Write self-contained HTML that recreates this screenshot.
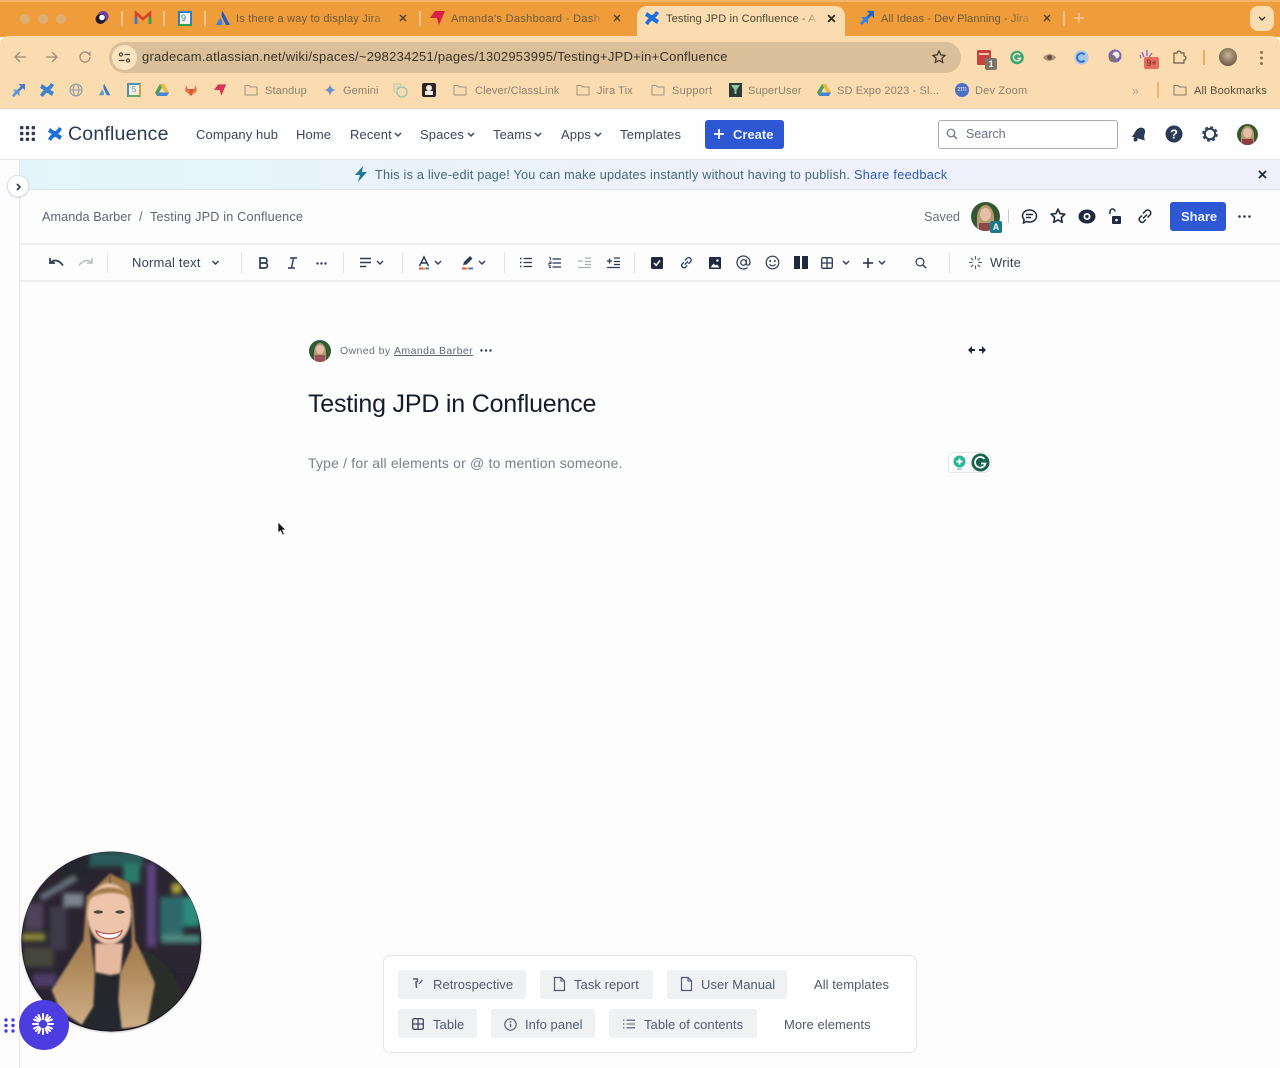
<!DOCTYPE html>
<html><head><meta charset="utf-8"><title>Testing JPD in Confluence</title>
<style>
html,body{margin:0;padding:0;width:1280px;height:1068px;overflow:hidden;background:#fdfdfe}
body{position:relative;font-family:"Liberation Sans",sans-serif;color:#2b3a55}
.t{position:absolute;white-space:nowrap;line-height:16px;height:16px}
.b{position:absolute}
svg{position:absolute;overflow:visible}
.tab{font-size:11px;color:#6b5a3d;letter-spacing:.2px}
.bm{font-size:11px;color:#8d8270;letter-spacing:.12px}
.nav{font-size:13px;color:#3a4660;letter-spacing:.1px}
.chip{position:absolute;background:#f0f1f3;border-radius:3px;height:29px}
.cl{font-size:13px;color:#4d5a70;letter-spacing:.05px}
</style></head><body>

<!-- chrome -->
<div class="b" style="left:0;top:0;width:1280px;height:37px;background:#ef9c3a"></div>
<div class="b" style="left:0;top:0;width:1280px;height:2px;background:#f3b56a"></div>
<div class="b" style="left:0;top:36px;width:1280px;height:73px;background:#fadcb0;border-radius:8px 8px 0 0"></div>
<div class="b" style="left:0;top:108px;width:1280px;height:1px;background:#e6d6bb"></div>
<div class="b" style="left:20px;top:14px;width:10px;height:10px;border-radius:50%;background:#e0ae72"></div>
<div class="b" style="left:38px;top:14px;width:10px;height:10px;border-radius:50%;background:#e0ae72"></div>
<div class="b" style="left:56px;top:14px;width:10px;height:10px;border-radius:50%;background:#e0ae72"></div>

<!-- tab icons -->
<svg style="left:94px;top:10px" width="16" height="16" viewBox="0 0 16 16"><circle cx="9" cy="6.500" r="5.500" fill="#6b3fa0"/><circle cx="6.500" cy="9" r="5" fill="#1c1a24"/><circle cx="8" cy="7.500" r="2.800" fill="#fff"/></svg>
<div class="b" style="left:121px;top:11px;width:2px;height:15px;background:#f6c285"></div>
<svg style="left:135px;top:11px" width="16" height="14" viewBox="0 0 16 14"><path d="M1 13V2l7 6 7-6v11" fill="none" stroke="#d8402f" stroke-width="2.600"/><path d="M1 13V6" stroke="#3a7bd5" stroke-width="2.600"/><path d="M15 13V6" stroke="#2ba24c" stroke-width="2.600"/></svg>
<div class="b" style="left:163px;top:11px;width:2px;height:15px;background:#f6c285"></div>
<div class="b" style="left:178px;top:11px;background:#f7f3e8;border:2px solid #2f7fc6;border-bottom-color:#2ba24c;width:10px;height:11px"></div>
<div class="t" style="left:181px;top:10px;font-size:9px;color:#2f7fc6">9</div>
<div class="b" style="left:204px;top:11px;width:2px;height:15px;background:#f6c285"></div>
<svg style="left:215px;top:10px" width="16" height="17" viewBox="0 0 16 17"><path d="M7.500 1c-1.500 3-1.200 5 .5 8l3 6h4z" fill="#1f5cc4"/><path d="M5 8L1 15h6c1-2 0-5-2-7z" fill="#3c7fe0"/></svg>
<div class="t tab" style="left:236px;top:11px">Is there a way to display Jira</div>
<div class="b" style="left:372px;top:8px;width:16px;height:20px;background:linear-gradient(90deg,rgba(239,156,58,0),#ef9c3a)"></div>
<svg style="left:399px;top:14px" width="8" height="8" viewBox="0 0 8 8"><path d="M1 1l6 6M7 1L1 7" stroke="#4a3c28" stroke-width="1.400"/></svg>
<div class="b" style="left:419px;top:11px;width:2px;height:15px;background:#f6c285"></div>
<svg style="left:430px;top:10px" width="16" height="16" viewBox="0 0 16 16"><path d="M5 1h10l-3 7-3 7-2-7H0z" fill="#dd1f47"/></svg>
<div class="t tab" style="left:451px;top:11px;letter-spacing:.33px">Amanda's Dashboard - Dash</div>
<div class="b" style="left:590px;top:8px;width:14px;height:20px;background:linear-gradient(90deg,rgba(239,156,58,0),#ef9c3a)"></div>
<svg style="left:613px;top:14px" width="8" height="8" viewBox="0 0 8 8"><path d="M1 1l6 6M7 1L1 7" stroke="#4a3c28" stroke-width="1.400"/></svg>

<!-- active tab -->
<div class="b" style="left:637px;top:6px;width:208px;height:31px;background:#fadcb0;border-radius:10px 10px 0 0"></div>
<svg style="left:644px;top:10px" width="16" height="16" viewBox="0 0 16 16"><path d="M1 13c3-5 5-6 7-6s5 2 7 3l-2 4c-3-2-4-3-5-3s-2 1-4 4zM15 3c-3 5-5 6-7 6S3 7 1 6l2-4c3 2 4 3 5 3s2-1 4-4z" fill="#1f6fe0"/></svg>
<div class="t tab" style="left:666px;top:11px;color:#4f4533;letter-spacing:.15px">Testing JPD in Confluence - A</div>
<div class="b" style="left:800px;top:8px;width:20px;height:20px;background:linear-gradient(90deg,rgba(250,220,176,0),#fadcb0)"></div>
<svg style="left:827px;top:14px" width="9" height="9" viewBox="0 0 8 8"><path d="M1 1l6 6M7 1L1 7" stroke="#2b2417" stroke-width="1.500"/></svg>
<svg style="left:859px;top:10px" width="16" height="16" viewBox="0 0 16 16"><path d="M15 1H8l2.500 2.500L7 7l2 2 3.500-3.500L15 8z" fill="#1b63c9"/><path d="M9 7H2l2.500 2.500L1 13l2 2 3.500-3.500L9 14z" fill="#2f86e6"/></svg>
<div class="t tab" style="left:881px;top:11px;letter-spacing:.1px">All Ideas - Dev Planning - Jira</div>
<div class="b" style="left:1010px;top:8px;width:24px;height:20px;background:linear-gradient(90deg,rgba(239,156,58,0),#ef9c3a)"></div>
<svg style="left:1043px;top:14px" width="8" height="8" viewBox="0 0 8 8"><path d="M1 1l6 6M7 1L1 7" stroke="#4a3c28" stroke-width="1.400"/></svg>
<div class="b" style="left:1063px;top:11px;width:2px;height:15px;background:#f6c285"></div>
<svg style="left:1074px;top:13px" width="10" height="10" viewBox="0 0 10 10"><path d="M5 0v10M0 5h10" stroke="#f7c88e" stroke-width="1.500"/></svg>
<div class="b" style="left:1250px;top:6px;width:24px;height:25px;background:#fadcb0;border-radius:8px"></div>
<svg style="left:1258px;top:16px" width="8" height="6" viewBox="0 0 8 6"><path d="M1 1l3 3 3-3" fill="none" stroke="#333" stroke-width="1.400"/></svg>

<!-- address row -->
<svg style="left:13px;top:50px" width="14" height="14" viewBox="0 0 14 14"><path d="M13 7H2M7 2L2 7l5 5" fill="none" stroke="#9a8d78" stroke-width="1.300"/></svg>
<svg style="left:45px;top:50px" width="14" height="14" viewBox="0 0 14 14"><path d="M1 7h11M7 2l5 5-5 5" fill="none" stroke="#9a8d78" stroke-width="1.300"/></svg>
<svg style="left:78px;top:50px" width="14" height="14" viewBox="0 0 14 14"><path d="M12 7a5 5 0 1 1-1.500-3.500L12 5V1.500" fill="none" stroke="#9a8d78" stroke-width="1.300"/></svg>
<div class="b" style="left:109px;top:42px;width:852px;height:31px;background:#d9bf9a;border-radius:16px"></div>
<div class="b" style="left:112px;top:45px;width:25px;height:25px;background:#fbe3bf;border-radius:50%"></div>
<svg style="left:118px;top:51px" width="13" height="13" viewBox="0 0 13 13"><circle cx="3" cy="3.500" r="1.600" fill="none" stroke="#4a3c28" stroke-width="1.100"/><path d="M6.500 3.500h5.500M1 9.500h5.500" stroke="#4a3c28" stroke-width="1.200"/><circle cx="10" cy="9.500" r="1.600" fill="none" stroke="#4a3c28" stroke-width="1.100"/></svg>
<div class="t" style="left:142px;top:49px;font-size:13px;color:#3b3224;letter-spacing:.25px">gradecam.atlassian.net/wiki/spaces/~298234251/pages/1302953995/Testing+JPD+in+Confluence</div>
<svg style="left:932px;top:50px" width="14" height="14" viewBox="0 0 14 14"><path d="M7 1l1.800 3.900 4.200.5-3.100 2.900.8 4.200L7 10.400l-3.700 2.100.8-4.200L1 5.400l4.200-.5z" fill="none" stroke="#3b3224" stroke-width="1.200"/></svg>

<!-- extensions -->
<div class="b" style="left:977px;top:50px;width:14px;height:15px;background:#c9413c;border-radius:1px"></div>
<div class="b" style="left:979px;top:53px;width:10px;height:2px;background:#f0c9a8"></div>
<div class="b" style="left:985px;top:58px;width:12px;height:12px;background:#7b7468;border-radius:2px;color:#fff;font-size:9px;line-height:12px;text-align:center;font-weight:bold">1</div>
<svg style="left:1010px;top:50px" width="14" height="15" viewBox="0 0 14 15"><circle cx="7" cy="7.500" r="6.800" fill="#3aa577"/><path d="M10 5.200a3.600 3.600 0 1 0 .5 3H7.500" fill="none" stroke="#f2e6cd" stroke-width="1.500"/></svg>
<svg style="left:1042px;top:52px" width="15" height="11" viewBox="0 0 15 11"><path d="M1 5.500C4 1 11 1 14 5.500 11 10 4 10 1 5.500z" fill="#a8927a"/><circle cx="7.500" cy="5.500" r="2.400" fill="#6b4e43"/></svg>
<svg style="left:1074px;top:50px" width="15" height="15" viewBox="0 0 15 15"><circle cx="7.500" cy="7.500" r="7" fill="#a8c5e6"/><path d="M10.500 4.500a4.300 4.300 0 1 0 0 6" fill="none" stroke="#3176c4" stroke-width="2"/></svg>
<svg style="left:1107px;top:49px" width="15" height="15" viewBox="0 0 15 15"><circle cx="8" cy="7" r="6.500" fill="#7c62b4"/><circle cx="9" cy="6" r="3.500" fill="#f7eee2"/><circle cx="5.500" cy="9.500" r="3.500" fill="#7e7676"/></svg>
<svg style="left:1139px;top:50px" width="14" height="10" viewBox="0 0 14 10"><path d="M2 8L1 5M5 7L3 2M8 6V0M10 7l3-4" stroke="#8c6ac4" stroke-width="1.400"/></svg>
<div class="b" style="left:1144px;top:57px;width:15px;height:12px;background:#e46c5e;border-radius:2px;color:#5b2a22;font-size:9px;line-height:12px;text-align:center">9+</div>
<svg style="left:1172px;top:50px" width="15" height="15" viewBox="0 0 15 15"><path d="M2 3h3a2 2 0 0 1 4 0h3v3a2 2 0 0 1 0 4v3H2z" fill="none" stroke="#6b5a3d" stroke-width="1.200"/></svg>
<div class="b" style="left:1203px;top:50px;width:2px;height:15px;background:#efae5c"></div>
<div class="b" style="left:1219px;top:48px;width:18px;height:18px;border-radius:50%;background:radial-gradient(circle at 50% 40%,#c8b595,#6e5b48 75%)"></div>
<div class="b" style="left:1260px;top:51px;width:3px;height:3px;border-radius:50%;background:#8a7858;box-shadow:0 5.500px 0 #8a7858,0 11px 0 #8a7858"></div>

<!-- bookmarks -->
<svg style="left:11px;top:83px" width="15" height="15" viewBox="0 0 16 16"><path d="M15 1H8l2.500 2.500L7 7l2 2 3.500-3.500L15 8z" fill="#3f7fc2"/><path d="M9 7H2l2.500 2.500L1 13l2 2 3.500-3.500L9 14z" fill="#5a9ad6"/></svg>
<svg style="left:39px;top:82px" width="16" height="16" viewBox="0 0 16 16"><path d="M1 13c3-5 5-6 7-6s5 2 7 3l-2 4c-3-2-4-3-5-3s-2 1-4 4zM15 3c-3 5-5 6-7 6S3 7 1 6l2-4c3 2 4 3 5 3s2-1 4-4z" fill="#3d82d0"/></svg>
<svg style="left:69px;top:83px" width="14" height="14" viewBox="0 0 14 14"><circle cx="7" cy="7" r="6" fill="none" stroke="#8c98a5" stroke-width="1.100"/><ellipse cx="7" cy="7" rx="2.800" ry="6" fill="none" stroke="#8c98a5"/><path d="M1 7h12" stroke="#8c98a5"/></svg>
<svg style="left:98px;top:83px" width="13" height="14" viewBox="0 0 16 17"><path d="M7.500 1c-1.500 3-1.200 5 .5 8l3 6h4z" fill="#3a78c0"/><path d="M5 8L1 15h6c1-2 0-5-2-7z" fill="#5c9ad8"/></svg>
<div class="b" style="left:127px;top:83px;width:10px;height:10px;background:#f7eedd;border:2px solid #4a92b8;border-bottom-color:#62a86a;border-right-color:#c8a63f;color:#4a92b8;font-size:8px;line-height:10px;text-align:center">5</div>
<svg style="left:155px;top:84px" width="14" height="12" viewBox="0 0 14 12"><path d="M5 0h4l5 8.500h-4z" fill="#e9b83f"/><path d="M5 0L0 8.500l2 3.500L7 3.500z" fill="#4f9e58"/><path d="M2 12h10l2-3.500H4z" fill="#4283d8"/></svg>
<svg style="left:184px;top:83px" width="14" height="14" viewBox="0 0 14 14"><path d="M7 13L1 8l1-6 2 4h6l2-4 1 6z" fill="#e8794f"/><path d="M7 13L4 6h6z" fill="#d9573c"/></svg>
<svg style="left:214px;top:83px" width="13" height="14" viewBox="0 0 16 16"><path d="M5 1h10l-3 7-3 7-2-7H0z" fill="#dd3358"/></svg>
<svg style="left:244px;top:84px" width="14" height="12" viewBox="0 0 14 12"><path d="M1 2.500V11h12V3H6.500L5 1.500H1z" fill="none" stroke="#a09580" stroke-width="1"/></svg>
<div class="t bm" style="left:265px;top:83px">Standup</div>
<svg style="left:324px;top:84px" width="12" height="12" viewBox="0 0 12 12"><path d="M6 0c.5 3.500 2.500 5.500 6 6-3.500.5-5.500 2.500-6 6-.5-3.500-2.500-5.500-6-6 3.500-.5 5.500-2.500 6-6z" fill="#6a93c8"/></svg>
<div class="t bm" style="left:343px;top:83px">Gemini</div>
<svg style="left:393px;top:83px" width="15" height="15" viewBox="0 0 15 15"><circle cx="9" cy="9" r="5" fill="none" stroke="#8cc2a8" stroke-width="1.200"/><path d="M1 1h7v3H4v5H1z" fill="none" stroke="#b4cdb0" stroke-width="1"/></svg>
<div class="b" style="left:422px;top:83px;width:14px;height:14px;background:#2b2521;border-radius:2px"></div>
<div class="b" style="left:426px;top:85px;width:6px;height:6px;border-radius:50%;background:#f3ece2"></div>
<div class="b" style="left:425px;top:91px;width:8px;height:4px;background:#f3ece2"></div>
<svg style="left:453px;top:84px" width="14" height="12" viewBox="0 0 14 12"><path d="M1 2.500V11h12V3H6.500L5 1.500H1z" fill="none" stroke="#a09580" stroke-width="1"/></svg>
<div class="t bm" style="left:475px;top:83px">Clever/ClassLink</div>
<svg style="left:576px;top:84px" width="14" height="12" viewBox="0 0 14 12"><path d="M1 2.500V11h12V3H6.500L5 1.500H1z" fill="none" stroke="#a09580" stroke-width="1"/></svg>
<div class="t bm" style="left:597px;top:83px">Jira Tix</div>
<svg style="left:651px;top:84px" width="14" height="12" viewBox="0 0 14 12"><path d="M1 2.500V11h12V3H6.500L5 1.500H1z" fill="none" stroke="#a09580" stroke-width="1"/></svg>
<div class="t bm" style="left:672px;top:83px;letter-spacing:.25px">Support</div>
<div class="b" style="left:729px;top:83px;width:13px;height:14px;background:#2d3a35"></div>
<svg style="left:731px;top:85px" width="9" height="10" viewBox="0 0 9 10"><path d="M0 0h9L5.500 5v4h-2V5z" fill="#8cc9a0"/></svg>
<div class="t bm" style="left:748px;top:83px">SuperUser</div>
<svg style="left:817px;top:84px" width="14" height="12" viewBox="0 0 14 12"><path d="M5 0h4l5 8.500h-4z" fill="#e9b83f"/><path d="M5 0L0 8.500l2 3.500L7 3.500z" fill="#4f9e58"/><path d="M2 12h10l2-3.500H4z" fill="#4283d8"/></svg>
<div class="t bm" style="left:837px;top:83px">SD Expo 2023 - Sl...</div>
<div class="b" style="left:955px;top:83px;width:14px;height:14px;border-radius:50%;background:#4c6fc8;color:#f4ead8;font-size:7px;line-height:14px;text-align:center">zm</div>
<div class="t bm" style="left:975px;top:83px;letter-spacing:.2px">Dev Zoom</div>
<div class="t" style="left:1132px;top:83px;font-size:12px;color:#a89c86">»</div>
<div class="b" style="left:1157px;top:82px;width:2px;height:16px;background:#efb567"></div>
<svg style="left:1173px;top:84px" width="14" height="12" viewBox="0 0 14 12"><path d="M1 2.500V11h12V3H6.500L5 1.500H1z" fill="none" stroke="#857a66" stroke-width="1"/></svg>
<div class="t" style="left:1194px;top:83px;font-size:11px;color:#564b39;letter-spacing:.2px">All Bookmarks</div>

<!-- nav -->
<div class="b" style="left:0;top:109px;width:1280px;height:50px;background:#fefefe;border-bottom:1px solid #e4e6ea"></div>
<svg style="left:20px;top:126px" width="15" height="15" viewBox="0 0 15 15" fill="#2b3a55"><rect x="0" y="0" width="3.400" height="3.400" rx="1"/><rect x="5.800" y="0" width="3.400" height="3.400" rx="1"/><rect x="11.600" y="0" width="3.400" height="3.400" rx="1"/><rect x="0" y="5.800" width="3.400" height="3.400" rx="1"/><rect x="5.800" y="5.800" width="3.400" height="3.400" rx="1"/><rect x="11.600" y="5.800" width="3.400" height="3.400" rx="1"/><rect x="0" y="11.600" width="3.400" height="3.400" rx="1"/><rect x="5.800" y="11.600" width="3.400" height="3.400" rx="1"/><rect x="11.600" y="11.600" width="3.400" height="3.400" rx="1"/></svg>
<svg style="left:47px;top:126px" width="16" height="16" viewBox="0 0 16 16"><path d="M1 13c3-5 5-6 7-6s5 2 7 3l-2 4c-3-2-4-3-5-3s-2 1-4 4zM15 3c-3 5-5 6-7 6S3 7 1 6l2-4c3 2 4 3 5 3s2-1 4-4z" fill="#1f6fd8"/></svg>
<div class="t" style="left:68px;top:122px;height:24px;line-height:24px;font-size:19.500px;color:#2b3a55;letter-spacing:.2px">Confluence</div>
<div class="t nav" style="left:196px;top:127px">Company hub</div>
<div class="t nav" style="left:296px;top:127px">Home</div>
<div class="t nav" style="left:350px;top:127px">Recent</div>
<svg style="left:394px;top:132px" width="8" height="6" viewBox="0 0 8 6"><path d="M1 1l3 3 3-3" fill="none" stroke="#3a4660" stroke-width="1.500"/></svg>
<div class="t nav" style="left:420px;top:127px">Spaces</div>
<svg style="left:467px;top:132px" width="8" height="6" viewBox="0 0 8 6"><path d="M1 1l3 3 3-3" fill="none" stroke="#3a4660" stroke-width="1.500"/></svg>
<div class="t nav" style="left:493px;top:127px">Teams</div>
<svg style="left:534px;top:132px" width="8" height="6" viewBox="0 0 8 6"><path d="M1 1l3 3 3-3" fill="none" stroke="#3a4660" stroke-width="1.500"/></svg>
<div class="t nav" style="left:561px;top:127px">Apps</div>
<svg style="left:594px;top:132px" width="8" height="6" viewBox="0 0 8 6"><path d="M1 1l3 3 3-3" fill="none" stroke="#3a4660" stroke-width="1.500"/></svg>
<div class="t nav" style="left:620px;top:127px;letter-spacing:.22px">Templates</div>
<div class="b" style="left:705px;top:120px;width:79px;height:29px;background:#2e57d4;border-radius:3px"></div>
<svg style="left:713px;top:128px" width="12" height="12" viewBox="0 0 12 12"><path d="M6 1v10M1 6h10" stroke="#fff" stroke-width="1.800"/></svg>
<div class="t" style="left:733px;top:127px;font-size:13px;color:#e9efff;font-weight:bold">Create</div>
<div class="b" style="left:938px;top:120px;width:178px;height:27px;border:1px solid #a9adb3;border-radius:3px;background:#fff"></div>
<svg style="left:946px;top:128px" width="12" height="12" viewBox="0 0 12 12"><circle cx="5" cy="5" r="3.800" fill="none" stroke="#6a7385" stroke-width="1.200"/><path d="M8 8l3 3" stroke="#6a7385" stroke-width="1.300"/></svg>
<div class="t" style="left:966px;top:126px;font-size:12.500px;color:#68717f">Search</div>
<svg style="left:1130px;top:126px" width="16" height="16" viewBox="0 0 16 16"><path d="M1.500 10.500C4 9 4.500 6.500 6 4.500S10.500 1 13 2c2.200 1 2.500 3.500 1.700 5.500-.8 2.200-.7 4.500.3 7z" fill="#2b3a55"/><circle cx="5.500" cy="13.500" r="2" fill="#2b3a55"/></svg>
<svg style="left:1165px;top:125px" width="18" height="18" viewBox="0 0 18 18"><circle cx="9" cy="9" r="8.500" fill="#2b3a55"/><text x="9" y="13.500" text-anchor="middle" font-family="Liberation Sans" font-size="13" font-weight="bold" fill="#fff">?</text></svg>
<svg style="left:1201px;top:125px" width="18" height="18" viewBox="0 0 18 18"><circle cx="9" cy="9" r="5.200" fill="none" stroke="#2b3a55" stroke-width="2"/><circle cx="9" cy="9" r="7" fill="none" stroke="#2b3a55" stroke-width="1.600" stroke-dasharray="3 2.500"/></svg>
<div class="b" style="left:1237px;top:124px;width:21px;height:21px;border-radius:50%;overflow:hidden;background:#35592f">
 <div class="b" style="left:4px;top:2px;width:13px;height:19px;border-radius:50% 50% 20% 20%;background:#b59a74"></div>
 <div class="b" style="left:6px;top:4px;width:9px;height:10px;border-radius:50%;background:#e2bea4"></div>
 <div class="b" style="left:5px;top:15px;width:11px;height:6px;background:#8c3b42"></div>
</div>

<!-- sidebar line & banner -->
<div class="b" style="left:19px;top:160px;width:1px;height:908px;background:#e6e8eb"></div>
<div class="b" style="left:20px;top:160px;width:1260px;height:29px;background:linear-gradient(90deg,#e3f5fb,#eef0fb 60%,#eff0fb);border-bottom:1px solid #dfe3e8"></div>
<div class="b" style="left:7px;top:175px;width:22px;height:22px;border-radius:50%;background:#fff;border:1px solid #dfe1e5;box-sizing:border-box;box-shadow:0 1px 2px rgba(9,30,66,.15)"></div>
<svg style="left:15px;top:183px" width="7" height="8" viewBox="0 0 7 8"><path d="M2 1l3 3-3 3" fill="none" stroke="#2b3a55" stroke-width="1.600"/></svg>
<svg style="left:354px;top:166px" width="14" height="16" viewBox="0 0 14 16"><path d="M9 0L1 9h5l-2 7 9-10H8z" fill="#1f7b94"/></svg>
<div class="t" style="left:375px;top:167px;font-size:12.700px;color:#45687d;letter-spacing:.21px">This is a live-edit page! You can make updates instantly without having to publish.</div>
<div class="t" style="left:854px;top:167px;font-size:12.700px;color:#2b5bb8;letter-spacing:.33px">Share feedback</div>
<svg style="left:1258px;top:170px" width="9" height="9" viewBox="0 0 9 9"><path d="M1 1l7 7M8 1L1 8" stroke="#1f2a40" stroke-width="1.800"/></svg>

<!-- breadcrumb row -->
<div class="t" style="left:42px;top:209px;font-size:12.700px;color:#5c6779;letter-spacing:.06px">Amanda Barber</div>
<div class="t" style="left:139px;top:209px;font-size:12.700px;color:#5c6779">/</div>
<div class="t" style="left:150px;top:209px;font-size:12.700px;color:#5c6779;letter-spacing:.17px">Testing JPD in Confluence</div>
<div class="t" style="left:924px;top:209px;font-size:12.700px;color:#68717f">Saved</div>
<div class="b" style="left:971px;top:202px;width:29px;height:29px;border-radius:50%;overflow:hidden;background:#33582f">
 <div class="b" style="left:6px;top:3px;width:17px;height:26px;border-radius:50% 50% 20% 20%;background:#b69a72"></div>
 <div class="b" style="left:9px;top:6px;width:11px;height:13px;border-radius:50%;background:#e3c1a8"></div>
 <div class="b" style="left:8px;top:21px;width:13px;height:8px;background:#8c4a4d"></div>
</div>
<div class="b" style="left:990px;top:221px;width:12px;height:12px;background:#1a7a8c;color:#fff;font-size:9px;line-height:12px;text-align:center;font-weight:bold;border-radius:2px">A</div>
<div class="b" style="left:1008px;top:209px;width:1px;height:14px;background:#c9cdd3"></div>
<svg style="left:1021px;top:208px" width="17" height="17" viewBox="0 0 17 17"><path d="M8.500 2c4 0 7 2.500 7 6s-3 6-7 6c-1 0-2-.2-2.800-.5L2.500 15l.6-3.500C2 10.500 1.500 9.300 1.500 8c0-3.500 3-6 7-6z" fill="none" stroke="#1f2a40" stroke-width="1.500"/><path d="M5 6.500h7M5 9.500h5" stroke="#1f2a40" stroke-width="1.400"/></svg>
<svg style="left:1050px;top:208px" width="16" height="16" viewBox="0 0 14 14"><path d="M7 1l1.800 3.900 4.200.5-3.100 2.900.8 4.200L7 10.400l-3.700 2.100.8-4.200L1 5.400l4.200-.5z" fill="none" stroke="#1f2a40" stroke-width="1.400" stroke-linejoin="round"/></svg>
<svg style="left:1078px;top:209px" width="18" height="15" viewBox="0 0 18 15"><ellipse cx="9" cy="7.500" rx="8.500" ry="7" fill="#1f2a40"/><circle cx="9" cy="7.500" r="3.500" fill="#fff"/><circle cx="9" cy="7.500" r="1.700" fill="#1f2a40"/></svg>
<svg style="left:1107px;top:208px" width="15" height="17" viewBox="0 0 15 17"><path d="M3 6V3.500a2.500 2.500 0 0 1 5 0" fill="none" stroke="#1f2a40" stroke-width="1.500"/><rect x="5" y="8" width="9" height="8" rx="1" fill="#1f2a40"/><circle cx="9.500" cy="12" r="1.300" fill="#fff"/></svg>
<svg style="left:1136px;top:208px" width="17" height="17" viewBox="0 0 17 17"><path d="M7 10.500l4-4M6 7.500L3.500 10a3 3 0 0 0 4 4L10 11.500M7 5.500L9.500 3a3 3 0 0 1 4.500 4L11.500 9.500" fill="none" stroke="#1f2a40" stroke-width="1.500"/></svg>
<div class="b" style="left:1170px;top:202px;width:56px;height:29px;background:#2e57d4;border-radius:3px"></div>
<div class="t" style="left:1181px;top:209px;font-size:13px;color:#e9efff;font-weight:bold">Share</div>
<svg style="left:1238px;top:215px" width="13" height="3" viewBox="0 0 13 3" fill="#2b3a55"><circle cx="1.500" cy="1.500" r="1.300"/><circle cx="6.500" cy="1.500" r="1.300"/><circle cx="11.500" cy="1.500" r="1.300"/></svg>

<!-- editor toolbar -->
<div class="b" style="left:20px;top:243px;width:1260px;height:2px;background:#eceef0"></div>
<div class="b" style="left:20px;top:280px;width:1260px;height:2px;background:#eceef0"></div>
<svg style="left:49px;top:257px" width="15" height="11" viewBox="0 0 15 11"><path d="M1 1v5h5M1.500 6C3.500 3 9 1.500 14 8.500" fill="none" stroke="#2b3a55" stroke-width="1.700"/></svg>
<svg style="left:78px;top:257px" width="15" height="11" viewBox="0 0 15 11"><path d="M14 1v5H9M13.500 6C11.500 3 6 1.500 1 8.500" fill="none" stroke="#b7bcc4" stroke-width="1.500"/></svg>
<div class="b" style="left:107px;top:252px;width:1px;height:21px;background:#e3e5e8"></div>
<div class="t" style="left:132px;top:255px;font-size:13px;color:#35415a;letter-spacing:.2px">Normal text</div>
<svg style="left:211px;top:260px" width="9" height="6" viewBox="0 0 8 6"><path d="M1 1l3 3 3-3" fill="none" stroke="#2b3a55" stroke-width="1.400"/></svg>
<div class="b" style="left:241px;top:252px;width:1px;height:21px;background:#e3e5e8"></div>
<svg style="left:258px;top:257px" width="11" height="12" viewBox="0 0 11 12"><path d="M2 1h4.500a2.500 2.500 0 0 1 0 5H2zM2 6h5a2.500 2.500 0 0 1 0 5H2z" fill="none" stroke="#2b3a55" stroke-width="1.700"/></svg>
<svg style="left:287px;top:257px" width="11" height="12" viewBox="0 0 11 12"><path d="M3 1h7M1 11h7M6.500 1l-2 10" fill="none" stroke="#2b3a55" stroke-width="1.400"/></svg>
<svg style="left:316px;top:262px" width="11" height="3" viewBox="0 0 11 3" fill="#2b3a55"><circle cx="1.500" cy="1.500" r="1.200"/><circle cx="5.500" cy="1.500" r="1.200"/><circle cx="9.500" cy="1.500" r="1.200"/></svg>
<div class="b" style="left:343px;top:252px;width:1px;height:21px;background:#e3e5e8"></div>
<svg style="left:360px;top:257px" width="11" height="11" viewBox="0 0 11 11"><path d="M0 1.500h11M0 5.500h11M0 9.500h6" stroke="#2b3a55" stroke-width="1.500"/></svg>
<svg style="left:376px;top:260px" width="8" height="6" viewBox="0 0 8 6"><path d="M1 1l3 3 3-3" fill="none" stroke="#2b3a55" stroke-width="1.400"/></svg>
<div class="b" style="left:402px;top:252px;width:1px;height:21px;background:#e3e5e8"></div>
<svg style="left:418px;top:256px" width="12" height="14" viewBox="0 0 12 14"><path d="M1.500 10L6 1l4.500 9M3 7h6" fill="none" stroke="#2b3a55" stroke-width="1.400"/><path d="M1 12.500h4" stroke="#d8574a" stroke-width="2"/><path d="M5 12.500h3" stroke="#d9a63c" stroke-width="2"/><path d="M8 12.500h3" stroke="#3d7cd6" stroke-width="2"/></svg>
<svg style="left:434px;top:260px" width="8" height="6" viewBox="0 0 8 6"><path d="M1 1l3 3 3-3" fill="none" stroke="#2b3a55" stroke-width="1.400"/></svg>
<svg style="left:461px;top:255px" width="13" height="15" viewBox="0 0 13 15"><path d="M2 10l1-3 6-6 2.500 2.500-6 6z" fill="#2b3a55"/><path d="M1 13.500h4" stroke="#d8574a" stroke-width="2"/><path d="M5 13.500h3" stroke="#d9a63c" stroke-width="2"/><path d="M8 13.500h4" stroke="#3d7cd6" stroke-width="2"/></svg>
<svg style="left:478px;top:260px" width="8" height="6" viewBox="0 0 8 6"><path d="M1 1l3 3 3-3" fill="none" stroke="#2b3a55" stroke-width="1.400"/></svg>
<div class="b" style="left:504px;top:252px;width:1px;height:21px;background:#e3e5e8"></div>
<svg style="left:520px;top:257px" width="12" height="11" viewBox="0 0 12 11"><path d="M3.500 1.500H12M3.500 5.500H12M3.500 9.500H12" stroke="#2b3a55" stroke-width="1.300"/><path d="M0 1.500h1.500M0 5.500h1.500M0 9.500h1.500" stroke="#2b3a55" stroke-width="1.600"/></svg>
<svg style="left:549px;top:257px" width="12" height="12" viewBox="0 0 12 12"><path d="M3.500 2H12M3.500 6H12M3.500 10H12" stroke="#2b3a55" stroke-width="1.300"/><path d="M0 .8h1.500v2.500M0 5h2v1.500H0V9h2M0 10.500h2" fill="none" stroke="#2b3a55" stroke-width=".9"/></svg>
<svg style="left:578px;top:257px" width="13" height="11" viewBox="0 0 13 11"><path d="M7 1h6M7 4.500h6M7 7.500h6M0 10.500h13M0 4h5" stroke="#a9afb9" stroke-width="1.200"/></svg>
<svg style="left:607px;top:257px" width="13" height="11" viewBox="0 0 13 11"><path d="M7 1h6M7 4.500h6M7 7.500h6M0 10.500h13M0 4h5M2.500 1.500v5" stroke="#2b3a55" stroke-width="1.300"/></svg>
<div class="b" style="left:634px;top:252px;width:1px;height:21px;background:#e3e5e8"></div>
<svg style="left:651px;top:257px" width="12" height="12" viewBox="0 0 12 12"><rect width="12" height="12" rx="1.500" fill="#1f2a40"/><path d="M3 6l2.200 2.300L9 3.500" fill="none" stroke="#fff" stroke-width="1.500"/></svg>
<svg style="left:679px;top:256px" width="14" height="14" viewBox="0 0 17 17"><path d="M7 10.500l4-4M6 7.500L3.500 10a3 3 0 0 0 4 4L10 11.500M7 5.500L9.500 3a3 3 0 0 1 4.500 4L11.500 9.500" fill="none" stroke="#2b3a55" stroke-width="1.600"/></svg>
<svg style="left:709px;top:257px" width="12" height="12" viewBox="0 0 12 12"><rect width="12" height="12" rx="1" fill="#1f2a40"/><path d="M1.500 10.500l3-4 2 2 1.500-1 2.500 3z" fill="#fff"/><circle cx="8.500" cy="3.500" r="1.200" fill="#fff"/></svg>
<svg style="left:736px;top:255px" width="15" height="15" viewBox="0 0 15 15"><circle cx="7.500" cy="7.500" r="2.800" fill="none" stroke="#2b3a55" stroke-width="1.200"/><path d="M10.300 4.500v4.300c0 2 3.700 2 3.700-1.300a6.500 6.500 0 1 0-2.500 5.100" fill="none" stroke="#2b3a55" stroke-width="1.200"/></svg>
<svg style="left:765px;top:255px" width="15" height="15" viewBox="0 0 15 15"><circle cx="7.500" cy="7.500" r="6.300" fill="none" stroke="#2b3a55" stroke-width="1.200"/><circle cx="5.200" cy="6" r="1" fill="#2b3a55"/><circle cx="9.800" cy="6" r="1" fill="#2b3a55"/><path d="M4.500 9.300c1.500 2 4.500 2 6 0" fill="none" stroke="#2b3a55" stroke-width="1.200"/></svg>
<div class="b" style="left:794px;top:256px;width:6px;height:13px;background:#1f2a40"></div>
<div class="b" style="left:802px;top:256px;width:6px;height:13px;background:#1f2a40"></div>
<svg style="left:821px;top:257px" width="12" height="12" viewBox="0 0 12 12"><rect x=".7" y=".7" width="10.600" height="10.600" rx="1.500" fill="none" stroke="#2b3a55" stroke-width="1.300"/><path d="M6 1v10M1 6h10" stroke="#2b3a55" stroke-width="1.300"/></svg>
<svg style="left:842px;top:260px" width="8" height="6" viewBox="0 0 8 6"><path d="M1 1l3 3 3-3" fill="none" stroke="#2b3a55" stroke-width="1.400"/></svg>
<svg style="left:862px;top:257px" width="12" height="12" viewBox="0 0 12 12"><path d="M6 1v10M1 6h10" stroke="#1f2a40" stroke-width="1.500"/></svg>
<svg style="left:878px;top:260px" width="8" height="6" viewBox="0 0 8 6"><path d="M1 1l3 3 3-3" fill="none" stroke="#2b3a55" stroke-width="1.400"/></svg>
<svg style="left:915px;top:257px" width="12" height="12" viewBox="0 0 12 12"><circle cx="5" cy="5" r="3.900" fill="none" stroke="#2b3a55" stroke-width="1.200"/><path d="M8 8l3.300 3.300" stroke="#2b3a55" stroke-width="1.300"/></svg>
<div class="b" style="left:949px;top:252px;width:1px;height:21px;background:#e3e5e8"></div>
<svg style="left:969px;top:256px" width="13" height="13" viewBox="0 0 13 13"><path d="M6.500 0v3.500M6.500 9.500V13M0 6.500h3.500M9.500 6.500H13M2 2l2.300 2.300M8.700 8.700L11 11M11 2L8.700 4.300M4.300 8.700L2 11" stroke="#4d5a70" stroke-width="1.100"/></svg>
<div class="t" style="left:990px;top:255px;font-size:13px;color:#35415a;letter-spacing:.2px">Write</div>

<!-- content -->
<div class="b" style="left:309px;top:340px;width:22px;height:22px;border-radius:50%;overflow:hidden;background:#2f5a33">
 <div class="b" style="left:5px;top:3px;width:12px;height:19px;border-radius:50% 50% 20% 20%;background:#b59a74"></div>
 <div class="b" style="left:7px;top:5px;width:8px;height:9px;border-radius:50%;background:#e2c0a8"></div>
 <div class="b" style="left:6px;top:15px;width:10px;height:7px;background:#9c5058"></div>
</div>
<div class="t" style="left:340px;top:343px;font-size:10.500px;color:#68717f;letter-spacing:.4px">Owned by</div>
<div class="t" style="left:394px;top:343px;font-size:10.500px;color:#5c6779;letter-spacing:.42px;text-decoration:underline">Amanda Barber</div>
<svg style="left:480px;top:349px" width="12" height="3" viewBox="0 0 12 3" fill="#2b3a55"><circle cx="1.500" cy="1.500" r="1.200"/><circle cx="6" cy="1.500" r="1.200"/><circle cx="10.500" cy="1.500" r="1.200"/></svg>
<svg style="left:968px;top:345px" width="18" height="10" viewBox="0 0 18 10" fill="#1f2a40"><path d="M0 5l4-4v3h3v2H4v3zM18 5l-4-4v3h-3v2h3v3z"/></svg>
<div class="t" style="left:308px;top:388px;height:32px;line-height:32px;font-size:25px;color:#141b2c;letter-spacing:-.2px">Testing JPD in Confluence</div>
<div class="t" style="left:308px;top:455px;font-size:14px;color:#76808e;letter-spacing:.18px">Type / for all elements or @ to mention someone.</div>

<!-- grammarly -->
<div class="b" style="left:948px;top:452px;width:44px;height:21px;background:#fdfdfd;border:1px solid #e6e8e8;border-radius:6px 9px 9px 3px;box-sizing:border-box"></div>
<svg style="left:953px;top:455px" width="13" height="16" viewBox="0 0 13 16"><circle cx="6.500" cy="6.500" r="6" fill="#2bb596"/><path d="M6.500 3.500v6M3.500 6.500h6" stroke="#fff" stroke-width="1.800"/><path d="M4 14h5" stroke="#7fd4be" stroke-width="1.500"/></svg>
<svg style="left:971px;top:453px" width="19" height="19" viewBox="0 0 19 19"><circle cx="9.500" cy="9.500" r="9" fill="#15644f"/><path d="M13.500 6a5.300 5.300 0 1 0 1 4.500H10" fill="none" stroke="#fff" stroke-width="1.700"/></svg>

<!-- cursor -->
<svg style="left:277px;top:521px" width="10" height="16" viewBox="0 0 10 16"><path d="M1 1v11l2.600-2.300L5.500 14l1.800-.8-1.800-4.200H9z" fill="#111" stroke="#fff" stroke-width=".7"/></svg>

<!-- bottom panel -->
<div class="b" style="left:383px;top:955px;width:534px;height:98px;background:#fefefe;border:1px solid #e4e6e9;border-radius:7px;box-sizing:border-box"></div>
<div class="chip" style="left:398px;top:970px;width:128px"></div>
<svg style="left:412px;top:978px" width="12" height="12" viewBox="0 0 12 12"><path d="M1 1h4.500v2.500L4 4 4.500 10" fill="none" stroke="#4d5a70" stroke-width="1.500"/><path d="M7 6l3.500-4" stroke="#4d5a70" stroke-width="1.300"/></svg>
<div class="t cl" style="left:433px;top:977px">Retrospective</div>
<div class="chip" style="left:540px;top:970px;width:113px"></div>
<svg style="left:553px;top:976px" width="13" height="16" viewBox="0 0 13 16"><path d="M1.500 1.500h6.500l3.500 3.500v9.500h-10z" fill="none" stroke="#4d5a70" stroke-width="1.200"/><path d="M8 1.500V5h3.500" fill="none" stroke="#4d5a70" stroke-width="1.100"/></svg>
<div class="t cl" style="left:574px;top:977px">Task report</div>
<div class="chip" style="left:667px;top:970px;width:120px"></div>
<svg style="left:680px;top:976px" width="13" height="16" viewBox="0 0 13 16"><path d="M1.500 1.500h6.500l3.500 3.500v9.500h-10z" fill="none" stroke="#4d5a70" stroke-width="1.200"/><path d="M8 1.500V5h3.500" fill="none" stroke="#4d5a70" stroke-width="1.100"/></svg>
<div class="t cl" style="left:701px;top:977px">User Manual</div>
<div class="t cl" style="left:814px;top:977px">All templates</div>
<div class="chip" style="left:398px;top:1009px;width:79px"></div>
<svg style="left:412px;top:1018px" width="12" height="12" viewBox="0 0 12 12"><rect x=".7" y=".7" width="10.600" height="10.600" rx="1.500" fill="none" stroke="#3d4a60" stroke-width="1.300"/><path d="M6 1v10M1 6h10" stroke="#3d4a60" stroke-width="1.300"/></svg>
<div class="t cl" style="left:433px;top:1017px">Table</div>
<div class="chip" style="left:491px;top:1009px;width:104px"></div>
<svg style="left:504px;top:1018px" width="13" height="13" viewBox="0 0 13 13"><circle cx="6.500" cy="6.500" r="5.700" fill="none" stroke="#4d5a70" stroke-width="1.100"/><path d="M6.500 5.800v3.500" stroke="#4d5a70" stroke-width="1.400"/><circle cx="6.500" cy="3.900" r=".9" fill="#4d5a70"/></svg>
<div class="t cl" style="left:525px;top:1017px">Info panel</div>
<div class="chip" style="left:609px;top:1009px;width:148px"></div>
<svg style="left:623px;top:1019px" width="12" height="10" viewBox="0 0 12 10"><path d="M3.500 1.200H12M3.500 5H12M3.500 8.800H12" stroke="#4d5a70" stroke-width="1.100"/><path d="M0 1.200h1.300M0 5h1.300M0 8.800h1.300" stroke="#4d5a70" stroke-width="1.200"/></svg>
<div class="t cl" style="left:644px;top:1017px">Table of contents</div>
<div class="t cl" style="left:784px;top:1017px">More elements</div>

<!-- webcam bubble (drawn in 3x crop coordinates of the reference) -->
<svg style="left:0;top:840px" width="220" height="228" viewBox="0 0 660 684">
<defs>
<clipPath id="c"><circle cx="334" cy="303" r="268"/></clipPath>
<filter id="bl" x="-20%" y="-20%" width="140%" height="140%"><feGaussianBlur stdDeviation="7"/></filter>
<filter id="s1" x="-10%" y="-10%" width="120%" height="120%"><feGaussianBlur stdDeviation="3"/></filter>
<linearGradient id="hl" x1="0" y1="0" x2="0" y2="1"><stop offset="0" stop-color="#a37a4a"/><stop offset=".55" stop-color="#a98355"/><stop offset="1" stop-color="#cfae86"/></linearGradient>
</defs>
<circle cx="334" cy="305" r="270" fill="#15121a" style="filter:drop-shadow(0 2px 3px rgba(0,0,0,.25))"/>
<g clip-path="url(#c)">
<rect x="60" y="30" width="550" height="550" fill="#2a2430"/>
<g filter="url(#bl)">
<rect x="270" y="35" width="160" height="45" fill="#2c5a5a"/>
<rect x="370" y="70" width="50" height="60" fill="#2a7a6c"/>
<rect x="180" y="60" width="90" height="60" fill="#23282c"/>
<rect x="440" y="70" width="28" height="250" fill="#5c4580"/>
<rect x="515" y="130" width="30" height="30" fill="#a8a63a"/>
<rect x="480" y="170" width="70" height="130" fill="#2f6a6c"/>
<rect x="550" y="170" width="50" height="90" fill="#2c8a7c"/>
<rect x="485" y="285" width="115" height="22" fill="#4d8a80"/>
<rect x="470" y="310" width="130" height="80" fill="#2c2530"/>
<rect x="75" y="190" width="55" height="80" fill="#4d4258"/>
<rect x="65" y="280" width="70" height="22" fill="#8a8a38"/>
<rect x="70" y="320" width="90" height="60" fill="#45473e"/>
<rect x="100" y="400" width="70" height="40" fill="#4d3a68"/>
<rect x="115" y="135" width="120" height="18" fill="#6c7280" transform="rotate(-30 175 145)"/>
<rect x="190" y="160" width="60" height="40" fill="#7b8590"/>
<rect x="150" y="200" width="50" height="130" fill="#3e3a48"/>
</g>
<path d="M430 330c50 20 90 60 120 140l-40 90H340z" fill="#2b2e2c" filter="url(#s1)"/>
<path d="M285 395h75l10 180H250z" fill="#24272b"/>
<path d="M285 310h85l-8 90-32 6-45-10z" fill="#e4b99e" filter="url(#s1)"/>
<path d="M330 100l-70 70-10 130-50 80-45 70 25 60 65 45 35-55 5-100-10-80-10-80 65-90z" fill="url(#hl)" filter="url(#s1)"/>
<path d="M330 100l60 30 10 70 5 100 25 50 35 80-25 130-75 5-10-85 5-80 35-80V200l-65-70z" fill="url(#hl)" filter="url(#s1)"/>
<ellipse cx="328" cy="222" rx="66" ry="92" fill="#edc5aa" filter="url(#s1)"/>
<path d="M265 180c10-45 110-55 130 0-20-28-100-30-130 0z" fill="#a37a4a" filter="url(#s1)"/>
<ellipse cx="295" cy="216" rx="14" ry="5" fill="#54402f"/><ellipse cx="360" cy="216" rx="14" ry="5" fill="#54402f"/>
<path d="M288 272c22 12 55 12 78 0-6 32-70 32-78 0z" fill="#fff" stroke="#b65a58" stroke-width="4"/>
</g>
</svg>
<div class="b" style="left:19px;top:1000px;width:50px;height:50px;border-radius:50%;background:#4b3de0"></div>
<svg style="left:32px;top:1013px" width="22" height="22" viewBox="0 0 22 22"><g stroke="#fff" stroke-width="2" stroke-linecap="round"><path d="M11 1v5M11 16v5M1 11h5M16 11h5M4 4l3.500 3.500M14.500 14.500L18 18M18 4l-3.500 3.500M7.500 14.500L4 18M6.500 2l2 4.500M13.500 15.500l2 4.500M15.500 2l-2 4.500M8.500 15.500l-2 4.500M2 6.500l4.500 2M15.500 13.500l4.500 2M20 6.500l-4.500 2M6.500 13.500l-4.500 2"/></g></svg>
<svg style="left:4px;top:1018px" width="11" height="15" viewBox="0 0 11 15" fill="#4b3de0"><circle cx="2" cy="2" r="1.700"/><circle cx="9" cy="2" r="1.700"/><circle cx="2" cy="7.500" r="1.700"/><circle cx="9" cy="7.500" r="1.700"/><circle cx="2" cy="13" r="1.700"/><circle cx="9" cy="13" r="1.700"/></svg>
</body></html>
